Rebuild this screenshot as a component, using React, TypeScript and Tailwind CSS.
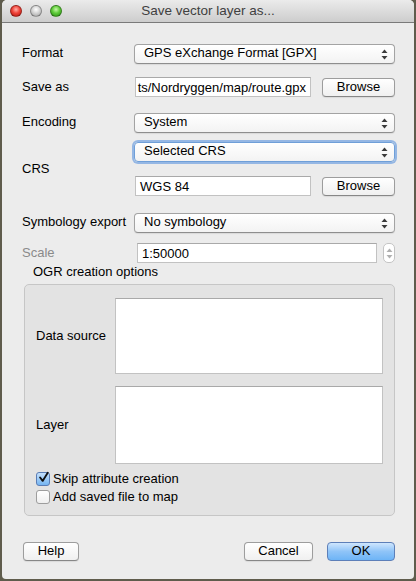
import React from 'react';

const font = { fontFamily: '"Liberation Sans", Arial, sans-serif' };

function Arrows({ light }: { light?: boolean }) {
  const c = light ? '#b0b0b0' : '#3a3a3a';
  return (
    <svg width="7" height="11" viewBox="0 0 7 11" className="shrink-0">
      <path d="M3.5 0.5 L6.5 4 L0.5 4 Z" fill={c} />
      <path d="M3.5 10.5 L6.5 7 L0.5 7 Z" fill={c} />
    </svg>
  );
}

function Combo({ value, focus }: { value: string; focus?: boolean }) {
  return (
    <div
      className={
        'flex-1 h-[20px] flex items-center justify-between pl-[9px] pr-[6px] rounded-[4px] border bg-gradient-to-b from-white to-[#f3f3f3] text-[13px] text-black ' +
        (focus
          ? 'border-[#6f9fd8] shadow-[0_0_0_2px_rgba(120,165,225,0.75)]'
          : 'border-[#a3a3a3] border-b-[#8e8e8e] shadow-[0_1px_1px_rgba(0,0,0,0.08)]')
      }
    >
      <span className="leading-none -mt-[3px]">{value}</span>
      <Arrows />
    </div>
  );
}

function Button({ label, w, primary }: { label: string; w: string; primary?: boolean }) {
  return (
    <div
      className={
        'h-[19px] flex items-center justify-center rounded-[4px] border text-[13px] text-black shrink-0 ' +
        w +
        ' ' +
        (primary
          ? 'border-[#5d7fb8] bg-gradient-to-b from-[#cfe6fd] via-[#8fc4f8] to-[#6db4f6]'
          : 'border-[#9d9d9d] border-b-[#878787] bg-gradient-to-b from-white to-[#f0f0f0] shadow-[0_1px_1px_rgba(0,0,0,0.08)]')
      }
    >
      <span className="leading-none -mt-[2px]">{label}</span>
    </div>
  );
}

function Field({ children, w, right }: { children: React.ReactNode; w: string; right?: boolean }) {
  return (
    <div
      className={
        'h-[20px] flex items-center overflow-hidden whitespace-nowrap bg-white border border-[#c2c2c2] border-t-[#a9a9a9] text-[13px] text-black ' +
        w +
        (right ? ' justify-end pr-[4px]' : ' pl-[4px]')
      }
    >
      <span className="leading-none">{children}</span>
    </div>
  );
}

function Light({ color }: { color: string }) {
  return (
    <div
      className="w-[12px] h-[12px] rounded-full border border-black/30"
      style={{ background: color }}
    />
  );
}

function Check({ checked }: { checked?: boolean }) {
  return (
    <div
      className={
        'w-[14px] h-[14px] rounded-[3px] border flex items-center justify-center shrink-0 ' +
        (checked
          ? 'border-[#5a7db5] bg-gradient-to-b from-[#c4e0fb] to-[#75b5f1]'
          : 'border-[#9d9d9d] bg-gradient-to-b from-white to-[#efefef]')
      }
    >
      {checked && (
        <svg width="13" height="13" viewBox="0 0 13 13" className="-mt-[3px] ml-[1px]">
          <path d="M2.5 6.5 L5.5 10.5 L11.5 1" fill="none" stroke="#111" strokeWidth="2.2" strokeLinecap="round" strokeLinejoin="round" />
        </svg>
      )}
    </div>
  );
}

export default function App() {
  return (
    <div className="w-[416px] h-[581px] bg-[#5f5c4c] px-[2px] pb-[2px]" style={font}>
      <div className="w-full h-full flex flex-col bg-[#ececec] rounded-t-[5px] rounded-b-[4px] overflow-hidden">
        {/* Title bar */}
        <div className="relative h-[23px] shrink-0 flex items-center bg-gradient-to-b from-[#ebebeb] to-[#cdcdcd] border-b border-[#7a7a7a]">
          <div className="flex items-center gap-[8px] pl-[8px]">
            <Light color="radial-gradient(circle at 50% 35%, #ffb0a8 0%, #f0443a 45%, #b3140c 100%)" />
            <Light color="radial-gradient(circle at 50% 35%, #ffffff 0%, #d4d4d4 45%, #9e9e9e 100%)" />
            <Light color="radial-gradient(circle at 50% 35%, #c8f7a8 0%, #5fcc3a 45%, #2a8c14 100%)" />
          </div>
          <div className="absolute inset-0 flex items-center justify-center text-[13.5px] text-[#404040]">
            Save vector layer as...
          </div>
        </div>

        {/* Body */}
        <div className="flex-1 flex flex-col pl-[20px] pr-[19px]">
          <div className="flex items-center h-[20px] mt-[21px]">
            <div className="w-[112px] text-[13px] text-black -mt-[3px]">Format</div>
            <Combo value="GPS eXchange Format [GPX]" />
          </div>

          <div className="flex items-center h-[20px] mt-[13px]">
            <div className="w-[113px] text-[13px] text-black -mt-[1px]">Save as</div>
            <Field w="w-[176px]" right>ts/Nordryggen/map/route.gpx</Field>
            <div className="ml-auto">
              <Button label="Browse" w="w-[73px]" />
            </div>
          </div>

          <div className="flex items-center h-[20px] mt-[16px]">
            <div className="w-[112px] text-[13px] text-black -mt-[3px]">Encoding</div>
            <Combo value="System" />
          </div>

          <div className="flex items-center mt-[9px]">
            <div className="w-[112px] text-[13px] text-black">CRS</div>
            <div className="flex-1 flex flex-col">
              <div className="flex h-[21px]">
                <Combo value="Selected CRS" focus />
              </div>
              <div className="flex items-center h-[20px] mt-[13px]">
                <div className="w-[1px]" />
                <Field w="w-[176px]">WGS 84</Field>
                <div className="ml-auto">
                  <Button label="Browse" w="w-[73px]" />
                </div>
              </div>
            </div>
          </div>

          <div className="flex items-center h-[20px] mt-[17px]">
            <div className="w-[112px] text-[13px] text-black whitespace-nowrap -mt-[3px]">Symbology export</div>
            <Combo value="No symbology" />
          </div>

          <div className="flex items-center h-[20px] mt-[10px]">
            <div className="w-[115px] text-[13px] text-[#8a8a8a] -mt-[1px]">Scale</div>
            <Field w="w-[240px]">1:50000</Field>
            <div className="ml-auto w-[12px] h-[20px] rounded-[5px] border border-[#c4c4c4] bg-white flex items-center justify-center">
              <Arrows light />
            </div>
          </div>

          <div className="text-[13px] text-black ml-[11px] mt-[1px] leading-[16px]">OGR creation options</div>

          {/* Group box */}
          <div className="mt-[4px] ml-[2px] h-[232px] rounded-[5px] border border-[#c6c6c6] bg-[#e3e3e3] flex flex-col pl-[11px] pr-[11px]">
            <div className="flex items-center h-[76px] mt-[13px]">
              <div className="w-[79px] text-[13px] text-black -mt-[1px]">Data source</div>
              <div className="flex-1 h-full bg-white border border-[#c2c2c2] border-t-[#a9a9a9]" />
            </div>
            <div className="flex items-center h-[78px] mt-[12px]">
              <div className="w-[79px] text-[13px] text-black -mt-[1px]">Layer</div>
              <div className="flex-1 h-full bg-white border border-[#c2c2c2] border-t-[#a9a9a9]" />
            </div>
            <div className="flex items-center gap-[3px] mt-[8px] h-[14px]">
              <Check checked />
              <span className="text-[13px] text-black leading-none -mt-[1px]">Skip attribute creation</span>
            </div>
            <div className="flex items-center gap-[3px] mt-[4px] h-[14px]">
              <Check />
              <span className="text-[13px] text-black leading-none -mt-[1px]">Add saved file to map</span>
            </div>
          </div>

          {/* Buttons */}
          <div className="flex items-center mt-[26px] ml-[1px]">
            <Button label="Help" w="w-[56px]" />
            <div className="flex-1" />
            <Button label="Cancel" w="w-[69px]" />
            <div className="w-[14px]" />
            <Button label="OK" w="w-[68px]" primary />
          </div>
        </div>
      </div>
    </div>
  );
}
